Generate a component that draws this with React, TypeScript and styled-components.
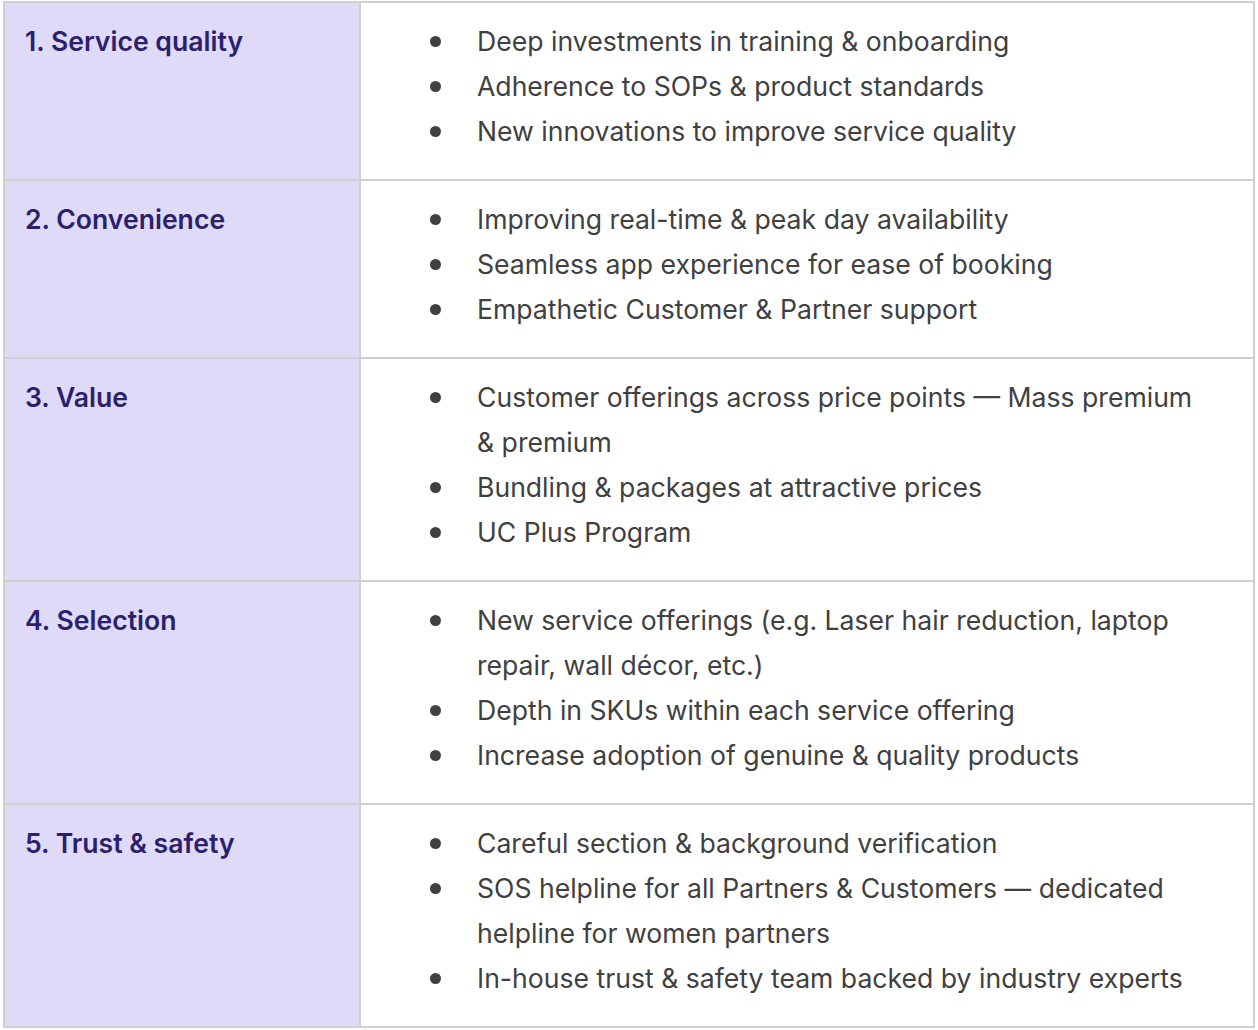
import React from 'react';
import styled, { createGlobalStyle } from 'styled-components';

// Types
interface Pillar {
  title: string;
  points: string[];
}

// Data
const pillars: Pillar[] = [
  {
    title: '1. Service quality',
    points: [
      'Deep investments in training & onboarding',
      'Adherence to SOPs & product standards',
      'New innovations to improve service quality',
    ],
  },
  {
    title: '2. Convenience',
    points: [
      'Improving real-time & peak day availability',
      'Seamless app experience for ease of booking',
      'Empathetic Customer & Partner support',
    ],
  },
  {
    title: '3. Value',
    points: [
      'Customer offerings across price points \u2014 Mass premium & premium',
      'Bundling & packages at attractive prices',
      'UC Plus Program',
    ],
  },
  {
    title: '4. Selection',
    points: [
      'New service offerings (e.g. Laser hair reduction, laptop repair, wall d\u00e9cor, etc.)',
      'Depth in SKUs within each service offering',
      'Increase adoption of genuine & quality products',
    ],
  },
  {
    title: '5. Trust & safety',
    points: [
      'Careful section & background verification',
      'SOS helpline for all Partners & Customers \u2014 dedicated helpline for women partners',
      'In-house trust & safety team backed by industry experts',
    ],
  },
];

// Styled Components
const GlobalStyle = createGlobalStyle`
  html, body {
    margin: 0;
    padding: 0;
    background: #ffffff;
  }
  body {
    font-family: Inter, "Noto Sans", sans-serif;
    -webkit-font-smoothing: antialiased;
  }
`;

const Page = styled.div`
  padding: 1px 3px 3px 3px;
`;

const Table = styled.table`
  width: 1252px;
  border-collapse: collapse;
  table-layout: fixed;
`;

const HeadCell = styled.th`
  width: 314px;
  background-color: #dedaf7;
  border: 2px solid #d0d0d0;
  padding: 16px 20px 25px;
  text-align: left;
  vertical-align: top;
  font-size: 26.6px;
  line-height: 45px;
  font-weight: 600;
  color: #2b1f6e;
`;

const BodyCell = styled.td`
  background-color: #ffffff;
  border: 2px solid #d0d0d0;
  padding: 16px 40px 25px 116px;
  vertical-align: top;
`;

const List = styled.ul`
  list-style: none;
  margin: 0;
  padding: 0;
`;

const Item = styled.li`
  position: relative;
  font-size: 26.6px;
  line-height: 45px;
  font-weight: 400;
  color: #404040;

  &::before {
    content: '';
    position: absolute;
    left: -47px;
    top: 17px;
    width: 11px;
    height: 11px;
    border-radius: 50%;
    background-color: #404040;
  }
`;

// Component
const App: React.FC = () => {
  return (
    <>
      <GlobalStyle />
      <Page>
        <Table>
          <tbody>
            {pillars.map((pillar) => (
              <tr key={pillar.title}>
                <HeadCell>{pillar.title}</HeadCell>
                <BodyCell>
                  <List>
                    {pillar.points.map((point) => (
                      <Item key={point}>{point}</Item>
                    ))}
                  </List>
                </BodyCell>
              </tr>
            ))}
          </tbody>
        </Table>
      </Page>
    </>
  );
};

export default App;
